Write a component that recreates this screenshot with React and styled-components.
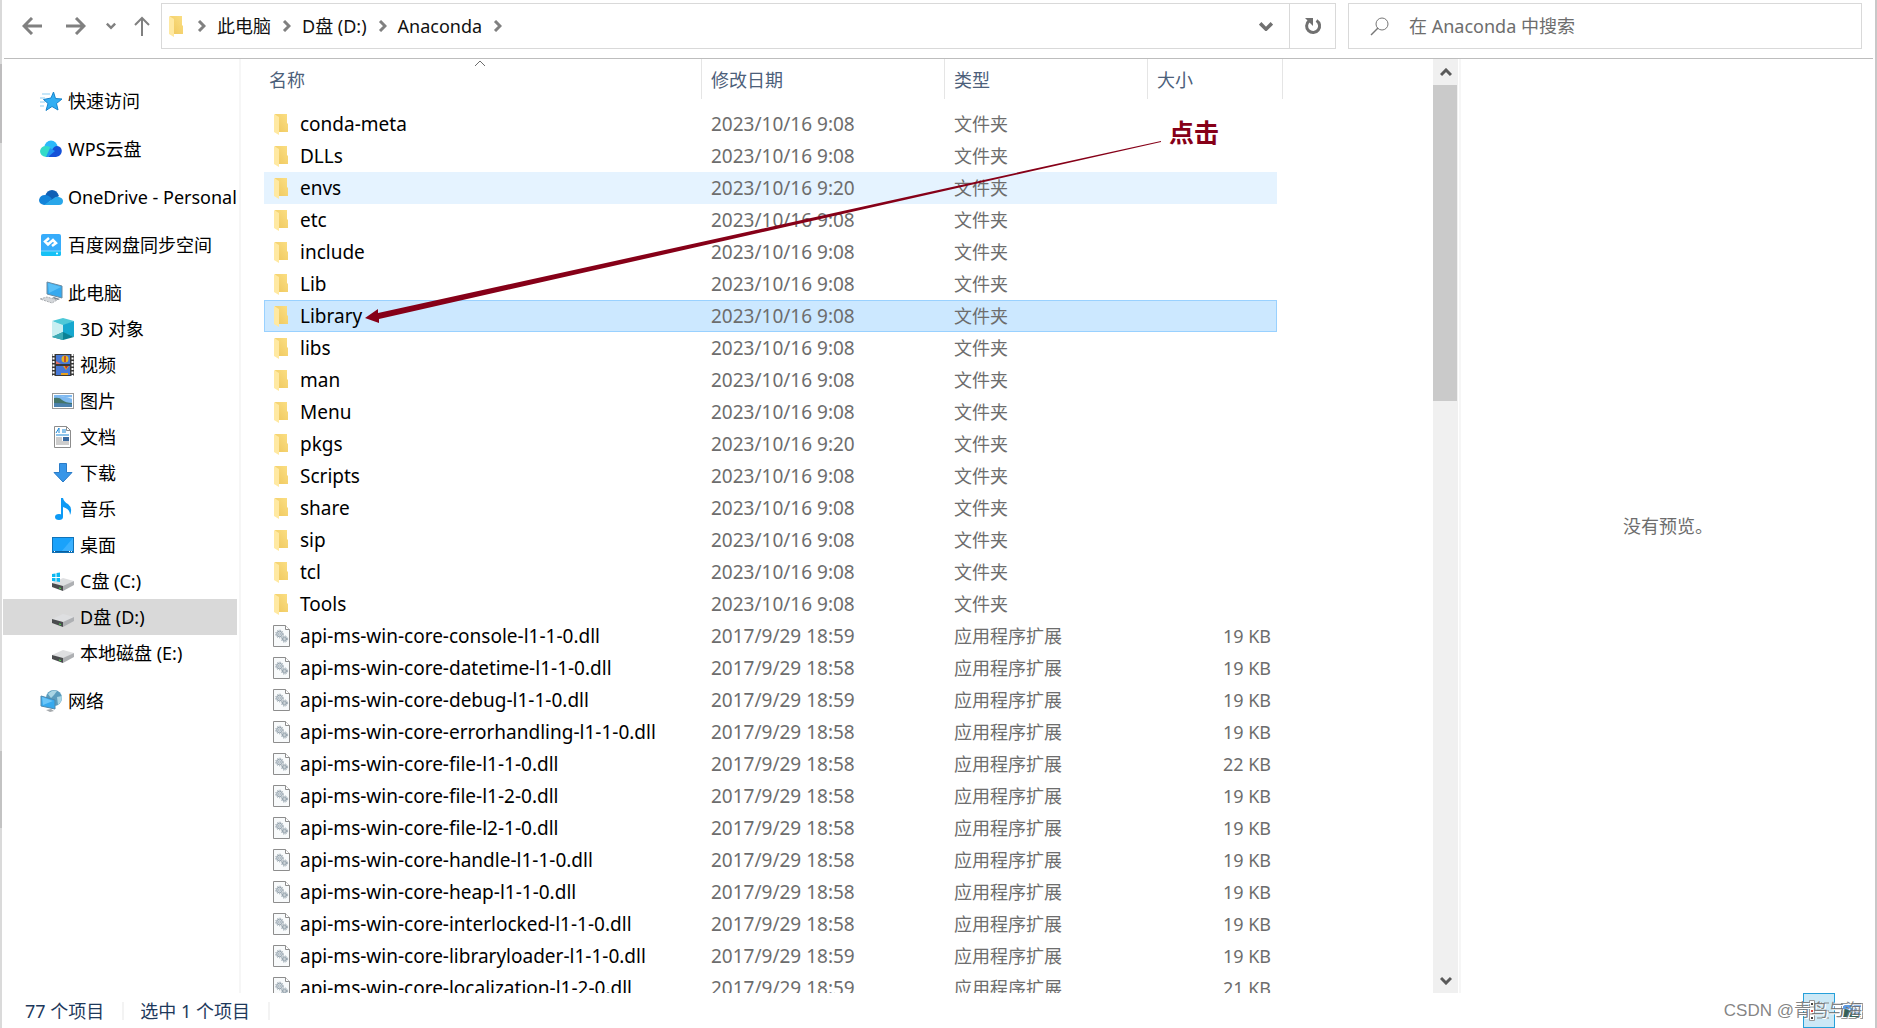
import React, { useState } from 'react';
import styled, { createGlobalStyle, css } from 'styled-components';

const sans = '"Noto Sans", "Noto Sans CJK SC", sans-serif';
const border = '#d9d9d9';
const muted = '#6d6d6d';
const heading = '#4c607a';
const ink = '#860018';

const GlobalStyle = createGlobalStyle`
  * {
    box-sizing: border-box;
  }

  body {
    margin: 0;
    overflow: hidden;
    font-family: ${sans};
    font-size: 18px;
    line-height: 24px;
    color: #000;
    background: #fff;
  }

  button, input {
    margin: 0;
    padding: 0;
    border: 0;
    font: inherit;
    color: inherit;
    background: none;
  }

  svg {
    display: block;
    flex: none;
  }
`;

const Window = styled.div`
  position: relative;
  display: flex;
  flex-direction: column;
  height: 100vh;
  padding-left: 2px;
  background: linear-gradient(
      #d9d9d9 64px,
      #bebdbe 64px 143px,
      #dcdcdc 143px 751px,
      #c3c3c3 751px 828px,
      #dadada 828px
    )
    left / 2px 100% no-repeat;
  border-right: 2px solid #c8c8c8;
`;

const Toolbar = styled.header`
  display: flex;
  align-items: flex-start;
  height: 59px;
  margin: 0 2px;
  padding: 3px 11px 0 14px;
  border-bottom: 1px solid #bdbdbd;
`;

const NavButtons = styled.div`
  display: flex;
  align-items: center;
  gap: 16px;
  width: 143px;
  height: 46px;
`;

const NavButton = styled.button`
  display: grid;
  place-items: center;
  width: ${({ $width }) => $width}px;
  height: 46px;
  color: #808080;
`;

const AddressBar = styled.div`
  display: flex;
  flex: 1;
  align-items: stretch;
  height: 46px;
  margin-right: 12px;
  border: 1px solid ${border};
`;

const Crumbs = styled.nav`
  display: flex;
  flex: 1;
  align-items: center;
  gap: 11px;
  padding-left: 6px;
  color: #808080;
`;

const Crumb = styled.a`
  color: #111;
  text-decoration: none;
`;

const AddressButton = styled.button`
  display: grid;
  place-items: center;
  width: 46px;
  color: #707070;
  border-left: ${({ $divided }) => ($divided ? `1px solid ${border}` : '0')};
`;

const SearchBox = styled.label`
  display: flex;
  align-items: center;
  gap: 20px;
  flex: 0 0 514px;
  height: 46px;
  padding-left: 21px;
  border: 1px solid ${border};
`;

const SearchInput = styled.input`
  flex: 1;
  min-width: 0;
  height: 32px;
  outline: none;

  &::placeholder {
    color: ${muted};
    opacity: 1;
  }
`;

const Body = styled.div`
  display: flex;
  flex: 1;
  min-height: 0;
  overflow: hidden;
`;

const Sidebar = styled.nav`
  display: flex;
  flex: 0 0 239px;
  flex-direction: column;
  gap: 12px;
  padding: 24px 2px 0 1px;
  border-right: 2px solid #f6f6f6;
`;

const Item = styled.a`
  display: flex;
  align-items: center;
  gap: 5px;
  height: 36px;
  padding-left: ${({ $nested }) => ($nested ? 48 : 36)}px;
  overflow: hidden;
  color: #000;
  white-space: nowrap;
  text-decoration: none;
  background: ${({ $selected }) => ($selected ? '#d9d9d9' : 'none')};
`;

const FilePane = styled.main`
  position: relative;
  flex: 1;
  min-width: 0;
  padding-left: 23px;
  overflow: hidden;
`;

const Table = styled.table`
  width: 1019px;
  table-layout: fixed;
  border-collapse: separate;
  border-spacing: 0;

  tbody::before {
    content: '';
    display: block;
    height: 9px;
  }
`;

const HeadCell = styled.th`
  position: relative;
  width: ${({ $width }) => $width}px;
  height: 40px;
  padding: 2px 0 0 ${({ $indent }) => $indent || 9}px;
  color: ${heading};
  font-weight: 400;
  text-align: left;
  border-right: ${({ $open }) => ($open ? '0' : '1px solid #e5e5e5')};
`;

const SortMark = styled.svg`
  position: absolute;
  top: 1px;
  left: 50%;
  margin-left: -9px;
`;

const Cell = styled.td`
  height: 32px;
  padding: 0 0 0 9px;
  color: ${muted};
  font-size: ${({ $latin }) => ($latin ? 19 : 18)}px;
  line-height: 24px;
  white-space: nowrap;
`;

const NameCell = styled(Cell)`
  color: #000;
`;

const SizeCell = styled(Cell)`
  padding-right: 6px;
  text-align: right;
`;

const NameInner = styled.div`
  display: flex;
  align-items: center;
  gap: 9px;
`;

const Row = styled.tr`
  ${({ $state }) =>
    $state === 'hover' &&
    css`
      td:not(:last-child) {
        background: #e5f3ff;
      }
    `}

  ${({ $state }) =>
    $state === 'selected' &&
    css`
      td:not(:last-child) {
        background: #cce8ff;
        border: solid #99d1ff;
        border-width: 1px 0;
      }

      td:first-child {
        box-shadow: inset 1px 0 #99d1ff;
      }

      td:nth-last-child(2) {
        box-shadow: inset -1px 0 #99d1ff;
      }
    `}
`;

const Annotation = styled.div`
  position: absolute;
  top: 58px;
  left: 124px;
  display: flex;
  align-items: flex-start;
  gap: 8px;
  color: ${ink};
  font-family: "AR PL UKai CN", KaiTi, "Noto Sans CJK SC", sans-serif;
  font-size: 25px;
  font-weight: 700;
  line-height: 28px;
  pointer-events: none;

  svg {
    margin-top: 24px;
  }
`;

const Scrollbar = styled.div`
  display: flex;
  flex: 0 0 25px;
  flex-direction: column;
  justify-content: space-between;
  background: #f0f0f0;
`;

const ScrollButton = styled.button`
  display: grid;
  place-items: center;
  height: 26px;
  color: #5a5a5a;
`;

const Thumb = styled.div`
  width: 24px;
  height: 316px;
  margin-bottom: auto;
  background: #cacaca;
`;

const Preview = styled.aside`
  display: grid;
  place-items: center;
  flex: 0 0 416px;
  margin-left: 1px;
  color: ${muted};
  border-left: 2px solid #f6f6f6;
`;

const StatusBar = styled.footer`
  display: flex;
  align-items: center;
  flex: 0 0 35px;
  padding-left: 23px;
  color: #1e395b;
`;

const StatusText = styled.span`
  padding-right: 18px;
  margin-right: 16px;
  line-height: 18px;
  border-right: 2px solid #f3f3f3;
`;

const ViewModes = styled.div`
  display: flex;
  gap: 2px;
  margin-left: auto;
  margin-right: 8px;
`;

const ViewButton = styled.button`
  display: grid;
  place-items: center;
  width: 30px;
  height: 35px;

  &[aria-pressed='true'] {
    width: 32px;
    background: #cbe8f6;
    border: 1px solid #26a0da;
  }
`;

const Watermark = styled.div`
  position: absolute;
  right: 13px;
  bottom: 5px;
  color: rgba(110, 110, 110, 0.85);
  font-family: "Liberation Sans", "Noto Sans CJK SC", sans-serif;
  font-size: 17px;
  text-shadow: 1px 1px #fff;
  pointer-events: none;
`;

const Chevron = ({ size = 9, dir = 'right', width = 3 }) => {
  const points = {
    right: '2,1 7,6 2,11',
    down: '1,2 6,7 11,2',
    up: '1,7 6,2 11,7',
  }[dir];
  const vertical = dir !== 'right';
  return (
    <svg
      width={vertical ? size : (size * 3) / 4}
      height={vertical ? (size * 3) / 4 : size}
      viewBox={vertical ? '0 0 12 9' : '0 0 9 12'}
    >
      <polyline points={points} fill="none" stroke="currentColor" strokeWidth={width} />
    </svg>
  );
};

const Arrow = ({ d, width = 20, height = 18, stroke = 3 }) => (
  <svg width={width} height={height} viewBox={`0 0 ${width} ${height}`}>
    <path d={d} fill="none" stroke="currentColor" strokeWidth={stroke} />
  </svg>
);

const FolderIcon = () => (
  <svg width="18" height="22" viewBox="0 0 18 22">
    <defs>
      <linearGradient id="folder" x1="0" x2="1" y1="1" y2="0">
        <stop offset="0" stopColor="#efc75c" />
        <stop offset="1" stopColor="#fbdf84" />
      </linearGradient>
    </defs>
    <path d="M2 1h12v9l1 1v8H5z" fill="url(#folder)" />
    <path d="M1 1l5 3v18l-5-3z" fill="#ffe9a2" />
  </svg>
);

const Gear = ({ x, y, r }) => (
  <g transform={`translate(${x} ${y})`} fill="none" stroke="#95a2ac">
    <circle r={r} strokeWidth="1" fill="#d3dce2" />
    <circle r={r + 1} strokeWidth="1" strokeDasharray="1.3 1.2" />
    <circle r="1" fill="#fff" strokeWidth=".8" />
  </g>
);

const DllIcon = () => (
  <svg width="18" height="22" viewBox="0 0 18 22">
    <path d="M.5.5h12l4 4v17H.5z" fill="#f8fafb" stroke="#8d8d8d" />
    <path d="M12.500 .5v4h4" fill="#fff" stroke="#8d8d8d" />
    <Gear x={6.500} y={9} r={2.800} />
    <Gear x={11.500} y={14} r={2.100} />
  </svg>
);

const driveBody = (
  <>
    <path d="M1 14L12 9l11 3-11 6z" fill="#dedfe1" />
    <path d="M1 14l11 3v5L1 18z" fill="#4a4c4e" />
    <path d="M12 17l11-5v4l-11 6z" fill="#aeb0b3" />
    <path d="M8 18.500l2 .5v1l-2-.5z" fill="#4be04b" />
  </>
);

const itemIcons = {
  star: (
    <>
      <path
        d="M14.500 3l2 6.500 6.500.5-5.500 4.500 1.500 6.500-6-3.500-6 4 2-7-4.500-4L12 9z"
        fill="#31aef3"
        stroke="#1683cb"
      />
      <path d="M3 5h8M1 9h5M1 13h5M1 17h4" stroke="#8bcdf2" />
    </>
  ),
  wps: (
    <>
      <circle cx="12" cy="10" r="6.500" fill="#2bb9fa" />
      <path d="M13 13q3-6 8-3 3 3 1 7-2 3-5 3H9z" fill="#1551d8" />
      <path d="M7 9q5 0 5 4 0 4-4 7H7q-6-1-6-6 1-5 6-5z" fill="#34dbc8" />
      <path d="M11 11l5 3-7 6H7z" fill="#2195f3" />
    </>
  ),
  onedrive: (
    <>
      <path d="M6 11Q8 5 13 5q5 0 7 6l-8 5z" fill="#0f5fb5" />
      <path d="M5 20q-5-1-5-5 1-5 6-5 4 0 7 4l-6 6z" fill="#1383d9" />
      <path d="M5 20l10-7q2-2 5-1 4 1 4 4 0 4-4 4z" fill="#29a7ea" />
    </>
  ),
  baidu: (
    <>
      <rect x="2" y="1" width="20" height="22" rx="2" fill="#37acfb" />
      <path d="M2 18h20v3q0 2-2 2H4q-2 0-2-2z" fill="#15c1f5" />
      <path d="M2 18h20" stroke="#83d8ff" />
      <path
        d="M10 5L6 8.500l3 3 5-4.500 3 3-4 3"
        fill="none"
        stroke="#fff"
        strokeWidth="2.500"
      />
      <circle cx="18" cy="20.500" r="1" fill="#fff" />
    </>
  ),
  pc: (
    <>
      <path d="M8 1l15 4v12L8 13z" fill="#36a9ee" stroke="#6d8ba0" />
      <path d="M9 2l13 4-12 6z" fill="#5bc0f7" />
      <path d="M15 16l6 2-2 1-6-2z" fill="#7b8791" />
      <path d="M1 18l7-2 10 3-5 3z" fill="#d4d7da" stroke="#a9adb1" strokeDasharray="2 1" />
    </>
  ),
  cube: (
    <>
      <path d="M1 4l11-3 11 3-11 5z" fill="#4ec9d8" />
      <path d="M1 4l11 4v8L1 20z" fill="#c8eff2" />
      <path d="M23 4L12 8v8l11 4z" fill="#16a8cf" />
      <path d="M1 20l11-5 11 5-11 3z" fill="#0b8296" />
      <path d="M1 20l11-5v8z" fill="#3eabb6" />
    </>
  ),
  video: (
    <>
      <rect x="1" y="1" width="22" height="22" fill="#383838" />
      <path d="M2.500 1v22M21.500 1v22" stroke="#fff" strokeWidth="2" strokeDasharray="2 1.500" />
      <path d="M5 2h14v9H5zM5 13h14v9H5z" fill="#4778d6" />
      <circle cx="14" cy="6" r="3.500" fill="#e8b521" />
      <path d="M14 3v6" stroke="#b8332b" strokeWidth="1.500" />
      <path d="M5 8l5 3H5z" fill="#e46e62" />
      <path d="M12 13h6l-3 4zM10 20h7v2h-7z" fill="#e9a21f" />
      <path d="M14 13h3l-2 3z" fill="#bd2929" />
    </>
  ),
  picture: (
    <>
      <rect x="1.500" y="4.500" width="21" height="15" fill="#fff" stroke="#9a9a9a" />
      <path d="M3 6h18v12H3z" fill="#7fb9f0" />
      <path d="M9 8q6-1 12 2V8z" fill="#d9ecfc" />
      <path d="M3 9q6-1 8 2 4 3 10 3v2H3z" fill="#437468" />
      <path d="M3 14q8 0 18 1v3H3z" fill="#4b81ad" />
    </>
  ),
  document: (
    <>
      <path d="M3.500 1.500h12l4 4v17h-16z" fill="#fff" stroke="#8c8c8c" />
      <path d="M15.500 1.500v4h4" fill="none" stroke="#8c8c8c" />
      <path d="M5 8l3-5v5M11 5h4M11 7h4M5 10h13" stroke="#1b87d4" fill="none" />
      <path d="M5 13h6M5 15h6M5 17h13M5 19h13" stroke="#9b9b9b" />
      <path d="M12 12h6v4h-6z" fill="#3a6aa0" />
    </>
  ),
  download: <path d="M8.500 2.500h7v9h5.500L12 21l-9-9.500h5.500z" fill="#3796e8" stroke="#2a7cc8" />,
  music: (
    <>
      <ellipse cx="8" cy="20" rx="4" ry="3" fill="#0d9af5" />
      <path d="M10 1h2q1 4 5 6 5 4 2 11 0-6-7-8v10h-2z" fill="#0d9af5" />
    </>
  ),
  desktop: (
    <>
      <rect x="1.500" y="4.500" width="21" height="15" fill="#1aa2fb" stroke="#1173b8" />
      <path d="M22 5v14H10z" fill="#3bb1ff" />
      <path d="M2 18.500h20" stroke="#0b5f9e" />
      <path d="M3 18.500h1M18 18.500h1M20 18.500h1" stroke="#fff" />
    </>
  ),
  system: (
    <>
      {driveBody}
      <path
        d="M1 5l3.500-.5V8H1zM5.500 4L9 3.500V8H5.500zM1 9h3.500v3.500L1 12zM5.500 9H9v4l-3.500-.5z"
        fill="#0bb8f1"
      />
    </>
  ),
  drive: driveBody,
  network: (
    <>
      <circle cx="15" cy="9" r="8" fill="#5a9cbd" />
      <path d="M9 5q4-5 9-3l-3 4-3 3zM18 8l5-1q0 6-4 9z" fill="#a9d5e4" />
      <path d="M2 7l14 4v9L2 17z" fill="#36a9ee" stroke="#4f89ad" />
      <path d="M3 8l11 4-10 4z" fill="#6cc6f8" />
      <path d="M7 21l5-1 3 2-4 1z" fill="#a5a9ac" />
    </>
  ),
};

const ItemIcon = ({ name }) => (
  <svg width="24" height="24" viewBox="0 0 24 24">
    {itemIcons[name]}
  </svg>
);

const crumbs = ['此电脑', 'D盘 (D:)', 'Anaconda'];

const places = [
  [{ icon: 'star', label: '快速访问' }],
  [{ icon: 'wps', label: 'WPS云盘' }],
  [{ icon: 'onedrive', label: 'OneDrive - Personal' }],
  [{ icon: 'baidu', label: '百度网盘同步空间' }],
  [
    { icon: 'pc', label: '此电脑' },
    { icon: 'cube', label: '3D 对象', nested: true },
    { icon: 'video', label: '视频', nested: true },
    { icon: 'picture', label: '图片', nested: true },
    { icon: 'document', label: '文档', nested: true },
    { icon: 'download', label: '下载', nested: true },
    { icon: 'music', label: '音乐', nested: true },
    { icon: 'desktop', label: '桌面', nested: true },
    { icon: 'system', label: 'C盘 (C:)', nested: true },
    { icon: 'drive', label: 'D盘 (D:)', nested: true },
    { icon: 'drive', label: '本地磁盘 (E:)', nested: true },
  ],
  [{ icon: 'network', label: '网络' }],
];

const folder = (name, time = '9:08') => ({
  name,
  date: `2023/10/16 ${time}`,
  type: '文件夹',
});

const dll = (name, time, size = 19) => ({
  name: `api-ms-win-core-${name}.dll`,
  date: `2017/9/29 ${time}`,
  type: '应用程序扩展',
  size: `${size} KB`,
});

const files = [
  folder('conda-meta'),
  folder('DLLs'),
  folder('envs', '9:20'),
  folder('etc'),
  folder('include'),
  folder('Lib'),
  folder('Library'),
  folder('libs'),
  folder('man'),
  folder('Menu'),
  folder('pkgs', '9:20'),
  folder('Scripts'),
  folder('share'),
  folder('sip'),
  folder('tcl'),
  folder('Tools'),
  dll('console-l1-1-0', '18:59'),
  dll('datetime-l1-1-0', '18:58'),
  dll('debug-l1-1-0', '18:59'),
  dll('errorhandling-l1-1-0', '18:58'),
  dll('file-l1-1-0', '18:58', 22),
  dll('file-l1-2-0', '18:58'),
  dll('file-l2-1-0', '18:58'),
  dll('handle-l1-1-0', '18:58'),
  dll('heap-l1-1-0', '18:58'),
  dll('interlocked-l1-1-0', '18:58'),
  dll('libraryloader-l1-1-0', '18:59'),
  dll('localization-l1-2-0', '18:59', 21),
];

const FileTable = () => {
  const [selected, setSelected] = useState('Library');
  const stateOf = name => {
    if (name === selected) return 'selected';
    return name === 'envs' ? 'hover' : undefined;
  };
  return (
    <Table>
      <thead>
        <tr>
          <HeadCell $width={438} $indent={5}>
            名称
            <SortMark width="12" height="7" viewBox="0 0 12 7">
              <path d="M1 6l5-5 5 5" fill="none" stroke="#6d6d6d" />
            </SortMark>
          </HeadCell>
          <HeadCell $width={243}>修改日期</HeadCell>
          <HeadCell $width={203}>类型</HeadCell>
          <HeadCell $width={129} $open>
            大小
          </HeadCell>
          <HeadCell $width={6} $indent={1} />
        </tr>
      </thead>
      <tbody>
        {files.map(({ name, date, type, size }) => (
          <Row key={name} $state={stateOf(name)} onClick={() => setSelected(name)}>
            <NameCell $latin>
              <NameInner>
                {size ? <DllIcon /> : <FolderIcon />}
                {name}
              </NameInner>
            </NameCell>
            <Cell $latin>{date}</Cell>
            <Cell>{type}</Cell>
            <SizeCell>{size}</SizeCell>
            <td />
          </Row>
        ))}
      </tbody>
    </Table>
  );
};

const App = () => (
  <Window>
    <GlobalStyle />
    <Toolbar>
      <NavButtons>
        <NavButton $width={28} aria-label="后退">
          <Arrow d="M10 1L2 9l8 8M2 9h18" />
        </NavButton>
        <NavButton $width={28} aria-label="前进">
          <Arrow d="M10 1l8 8-8 8M18 9H0" />
        </NavButton>
        <NavButton $width={10} aria-label="最近位置">
          <Chevron size={10} dir="down" />
        </NavButton>
        <NavButton $width={20} aria-label="上移">
          <Arrow width={16} height={20} stroke={2} d="M1 9l7-7 7 7M8 2v18" />
        </NavButton>
      </NavButtons>
      <AddressBar>
        <Crumbs>
          <FolderIcon />
          <Chevron size={12} />
          {crumbs.map(label => (
            <React.Fragment key={label}>
              <Crumb href="#">{label}</Crumb>
              <Chevron size={12} />
            </React.Fragment>
          ))}
        </Crumbs>
        <AddressButton aria-label="历史记录">
          <Chevron size={14} dir="down" />
        </AddressButton>
        <AddressButton $divided aria-label="刷新">
          <svg width="18" height="18" viewBox="0 0 18 18">
            <path
              d="M12.500 3.500A6.500 6.500 0 1 1 5 4"
              fill="none"
              stroke="currentColor"
              strokeWidth="3"
            />
            <path d="M1 1h8v8L6.500 6.500 4 4z" fill="currentColor" />
          </svg>
        </AddressButton>
      </AddressBar>
      <SearchBox>
        <svg width="19" height="19" viewBox="0 0 19 19" fill="none" stroke="#777">
          <circle cx="12" cy="7" r="6" />
          <path d="M8 11l-7 7" strokeWidth="1.500" />
        </svg>
        <SearchInput placeholder="在 Anaconda 中搜索" aria-label="搜索" />
      </SearchBox>
    </Toolbar>
    <Body>
      <Sidebar>
        {places.map(group => (
          <div key={group[0].label}>
            {group.map(({ icon, label, nested }) => (
              <Item key={label} href="#" $nested={nested} $selected={label === 'D盘 (D:)'}>
                <ItemIcon name={icon} />
                {label}
              </Item>
            ))}
          </div>
        ))}
      </Sidebar>
      <FilePane>
        <FileTable />
        <Annotation>
          <svg width="796" height="184" viewBox="0 0 796 184">
            <path d="M796 0L13 172v-4L0 177l14 5v-4L796 1z" fill={ink} />
          </svg>
          点击
        </Annotation>
      </FilePane>
      <Scrollbar>
        <ScrollButton aria-label="向上滚动">
          <Chevron size={12} dir="up" />
        </ScrollButton>
        <Thumb />
        <ScrollButton aria-label="向下滚动">
          <Chevron size={12} dir="down" />
        </ScrollButton>
      </Scrollbar>
      <Preview>没有预览。</Preview>
    </Body>
    <StatusBar>
      <StatusText>77 个项目</StatusText>
      <StatusText>选中 1 个项目</StatusText>
      <ViewModes>
        <ViewButton aria-pressed="true" aria-label="详细信息">
          <svg width="20" height="21" viewBox="0 0 20 21">
            <path d="M.5.5h5v20h-5zM.5 7h5M.5 14h5" fill="#fff" stroke="#999" />
            <path d="M2 4h2M2 18h2" stroke="#444" strokeWidth="2" />
            <path d="M2 11h2" stroke="#d44" strokeWidth="2" />
            <path d="M8 3h5M15 3h5M8 11h5M15 11h5M8 18h5M15 18h5" stroke="#888" />
          </svg>
        </ViewButton>
        <ViewButton aria-pressed="false" aria-label="大缩略图">
          <svg width="22" height="16" viewBox="0 0 22 16">
            <rect x=".5" y=".5" width="21" height="15" fill="#fff" stroke="#999" />
            <path d="M2 2h18v12H2z" fill="#5d9be4" />
            <path d="M2 6q6 0 9 4 4 1 9 1v3H2z" fill="#31605a" />
            <path d="M12 5l8-1v5z" fill="#d6e8fa" />
          </svg>
        </ViewButton>
      </ViewModes>
    </StatusBar>
    <Watermark>CSDN @青鸟与海</Watermark>
  </Window>
);

export default App;
